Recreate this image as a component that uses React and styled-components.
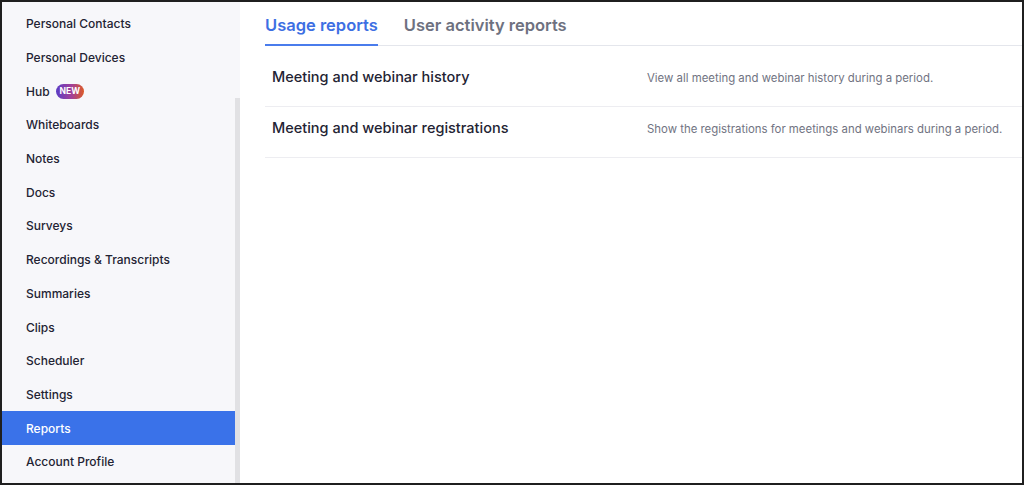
import styled, { createGlobalStyle } from 'styled-components';

const GlobalStyle = createGlobalStyle`
  html, body {
    margin: 0;
    padding: 0;
    background: #fff;
    font-family: Inter, "Liberation Sans", Arial, sans-serif;
  }
`;

const Frame = styled.div`
  display: flex;
  height: 485px;
  box-sizing: border-box;
  border: 2px solid #1f1f1f;
  overflow: hidden;
`;

const Sidebar = styled.aside`
  display: flex;
  width: 238px;
  flex-shrink: 0;
  background: #f7f7fa;
`;

const NavList = styled.nav`
  flex: 1;
  padding-top: 5px;
`;

const NavItem = styled.div`
  display: flex;
  align-items: center;
  gap: 6px;
  height: 33.7px;
  padding-left: 24px;
  font-size: 12px;
  font-weight: 500;
  color: ${p => (p.active ? '#fff' : '#232333')};
  background: ${p => (p.active ? '#3a72e9' : 'transparent')};
`;

const NewBadge = styled.span`
  display: inline-flex;
  align-items: center;
  height: 15px;
  padding: 0 4px;
  border-radius: 8px;
  background: linear-gradient(90deg, #5b3cc4 0%, #a2409a 55%, #dc5a26 100%);
  color: #fff;
  font-size: 8.5px;
  font-weight: 700;
`;

const ScrollRail = styled.div`
  width: 5px;
  padding-top: 96px;
`;

const ScrollThumb = styled.div`
  height: 100%;
  background: #e1e1e4;
`;

const Main = styled.main`
  flex: 1;
  padding-left: 25px;
`;

const TabBar = styled.div`
  display: flex;
  gap: 26px;
  height: 44px;
  box-sizing: border-box;
  border-bottom: 1px solid #e4e6ec;
`;

const Tab = styled.div`
  display: flex;
  align-items: center;
  height: 44px;
  box-sizing: border-box;
  padding-top: 4px;
  font-size: 16.5px;
  font-weight: 600;
  color: ${p => (p.active ? '#3d6fe3' : '#6e7180')};
  border-bottom: 2px solid ${p => (p.active ? '#4a7cec' : 'transparent')};
`;

const ReportList = styled.div`
  margin-top: 10px;
`;

const ReportRow = styled.div`
  display: flex;
  align-items: flex-start;
  height: 51px;
  box-sizing: border-box;
  padding: 12px 0 0 7px;
  border-bottom: 1px solid #ededf1;
`;

const ReportTitle = styled.div`
  width: 375px;
  flex-shrink: 0;
  font-size: 14.5px;
  font-weight: 500;
  line-height: 18px;
  color: #232333;
`;

const ReportDesc = styled.div`
  font-size: 11.4px;
  line-height: 20px;
  color: #717382;
`;

const navItems = [
  'Personal Contacts',
  'Personal Devices',
  'Hub',
  'Whiteboards',
  'Notes',
  'Docs',
  'Surveys',
  'Recordings & Transcripts',
  'Summaries',
  'Clips',
  'Scheduler',
  'Settings',
  'Reports',
  'Account Profile',
];

const reports = [
  { title: 'Meeting and webinar history', desc: 'View all meeting and webinar history during a period.' },
  { title: 'Meeting and webinar registrations', desc: 'Show the registrations for meetings and webinars during a period.' },
];

const App = () => (
  <>
    <GlobalStyle />
    <Frame>
      <Sidebar>
        <NavList>
          {navItems.map(item => (
            <NavItem key={item} active={item === 'Reports'}>
              {item}
              {item === 'Hub' && <NewBadge>NEW</NewBadge>}
            </NavItem>
          ))}
        </NavList>
        <ScrollRail>
          <ScrollThumb />
        </ScrollRail>
      </Sidebar>
      <Main>
        <TabBar>
          <Tab active>Usage reports</Tab>
          <Tab>User activity reports</Tab>
        </TabBar>
        <ReportList>
          {reports.map(r => (
            <ReportRow key={r.title}>
              <ReportTitle>{r.title}</ReportTitle>
              <ReportDesc>{r.desc}</ReportDesc>
            </ReportRow>
          ))}
        </ReportList>
      </Main>
    </Frame>
  </>
);

export default App;
